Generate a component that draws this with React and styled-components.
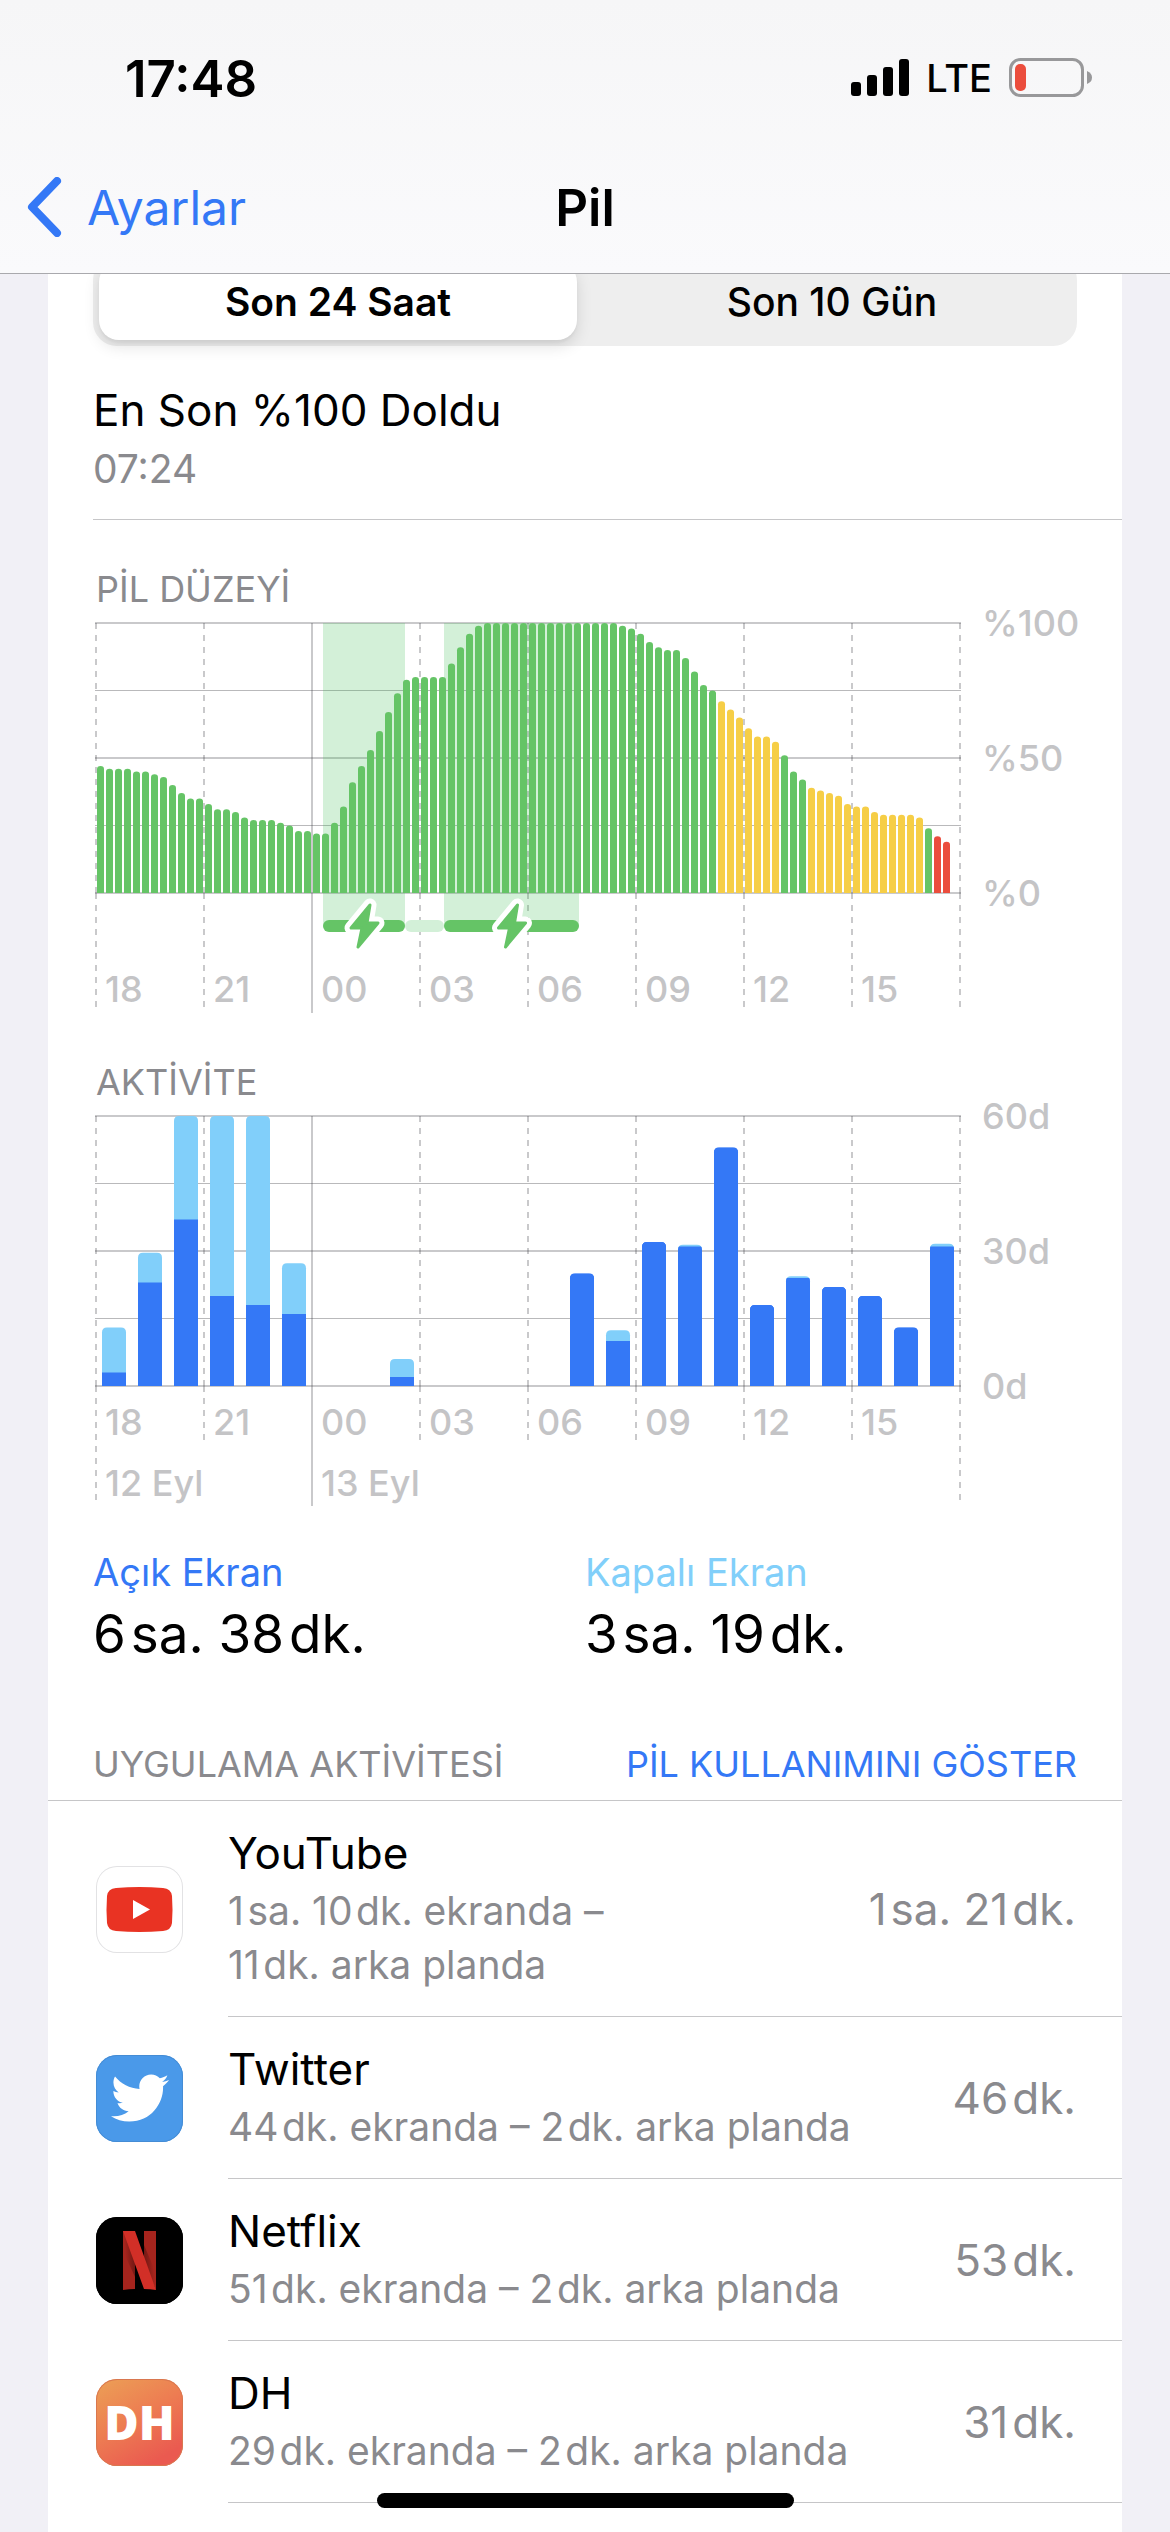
import React, { useState } from 'react';
import styled, { createGlobalStyle } from 'styled-components';
import { FaTwitter } from 'react-icons/fa';

const GREEN = '#65c466';
const YELLOW = '#f6ce46';
const RED = '#eb4d3d';
const BLUE = '#3478f6';
const SKY = '#81cffa';

// one bar for every 15 minutes
const levels = [
  47, 46, 46, 46, 45, 45, 44, 43, 40, 37, 35, 35,
  33, 31, 31, 30, 28, 27, 27, 27, 26, 25, 23, 23,
  22, 22, 26, 32, 41, 47, 53, 60, 67, 74, 79, 80,
  80, 80, 80, 85, 91, 96, 99, 100, 100, 100, 100, 100,
  100, 100, 100, 100, 100, 100, 100, 100, 100, 100, 99, 98,
  96, 93, 91, 90, 90, 87, 82, 77, 75, 71, 68, 65,
  61, 58, 58, 56, 51, 45, 42, 39, 38, 37, 36, 33,
  32, 32, 30, 29, 29, 29, 29, 28, 24, 21, 19,
];

const levelColor = (i) => {
  if (i >= 93) return RED;
  if ((i >= 69 && i <= 75) || (i >= 79 && i <= 91)) return YELLOW;
  return GREEN;
};

const charging = [
  { from: 227, to: 309 },
  { from: 348, to: 483 },
];

// minutes per hour: [screen on, total]
const activity = [
  [3, 13], [23, 29.6], [37, 60], [20, 60], [18, 60], [16, 27.3],
  [0, 0], [0, 0], [2, 6], [0, 0], [0, 0], [0, 0],
  [0, 0], [25, 25], [10, 12.4], [32, 32], [31, 31.4], [53, 53],
  [18, 18], [24, 24.4], [22, 22], [20, 20], [13, 13], [31, 31.6],
];

const hours = ['18', '21', '00', '03', '06', '09', '12', '15'];

const apps = [
  { id: 'youtube', name: 'YouTube', usage: ['1\u200Asa. 10\u200Adk. ekranda –', '11\u200Adk. arka planda'], total: '1\u200Asa. 21\u200Adk.' },
  { id: 'twitter', name: 'Twitter', usage: ['44\u200Adk. ekranda – 2\u200Adk. arka planda'], total: '46\u200Adk.' },
  { id: 'netflix', name: 'Netflix', usage: ['51\u200Adk. ekranda – 2\u200Adk. arka planda'], total: '53\u200Adk.' },
  { id: 'dh', name: 'DH', usage: ['29\u200Adk. ekranda – 2\u200Adk. arka planda'], total: '31\u200Adk.' },
];

const PLOT_X = 3;
const PLOT_Y = 13;
const PLOT_W = 864;
const PLOT_H = 270;

const ChartGrid = ({ tickEnd, edgeEnd }) => (
  <g stroke="#3c3c43" strokeOpacity="0.28" strokeWidth="2" fill="none">
    {[0, 0.5, 1].map((part) => (
      <path key={part} d={`M${PLOT_X - 1} ${PLOT_Y + PLOT_H * part}h${PLOT_W + 2}`} />
    ))}
    {[0.25, 0.75].map((part) => (
      <path
        key={part}
        d={`M${PLOT_X - 1} ${Math.floor(PLOT_Y + PLOT_H * part) + 0.5}h${PLOT_W + 2}`}
        strokeWidth="1"
        strokeOpacity="0.36"
      />
    ))}
    {[0, 1, 2, 3, 4, 5, 6, 7, 8].map((i) => {
      const solid = i === 2;
      const edge = i === 0 || i === 8;
      const end = solid ? 403 : edge ? edgeEnd : tickEnd;
      const x = PLOT_X + i * 108;
      const base = PLOT_Y + PLOT_H;
      return (
        <path
          key={i}
          d={`M${x} ${PLOT_Y}V${base}M${x} ${base}V${end}`}
          strokeDasharray={solid ? undefined : '6 6'}
        />
      );
    })}
  </g>
);

const HourLabels = ({ y }) => (
  <g>
    {hours.map((hour, i) => (
      <ChartText key={hour} x={PLOT_X + 9 + i * 108} y={y}>{hour}</ChartText>
    ))}
  </g>
);

const ValueLabels = ({ labels }) => (
  <g>
    {labels.map((label, i) => (
      <ChartText key={label} x={PLOT_X + PLOT_W + 22} y={PLOT_Y + 13 + i * 135}>{label}</ChartText>
    ))}
  </g>
);

const BOLT = 'M6 2L-13 25H-2L-6 44L14 20H3Z';

const BatteryChart = () => (
  <Chart viewBox="0 0 984 403" role="img" aria-label="Pil düzeyi">
    <ChartGrid tickEnd={397} edgeEnd={397} />
    {charging.map(({ from, to }) => (
      <rect key={from} x={PLOT_X + from} y={PLOT_Y} width={to - from} height="303" fill="#37bb4e" fillOpacity="0.22" />
    ))}
    {levels.map((level, i) => {
      const x = PLOT_X + i * 9 + 1;
      const top = PLOT_Y + PLOT_H - level * 2.7;
      return (
        <path
          key={i}
          d={`M${x} ${PLOT_Y + PLOT_H}V${top + 3}q0 -3 3.5 -3t3.5 3V${PLOT_Y + PLOT_H}z`}
          fill={levelColor(i)}
        />
      );
    })}
    <rect x={PLOT_X + 309} y="310" width="39" height="12" rx="6" fill="#d3f0d8" />
    {charging.map(({ from, to }) => (
      <g key={from}>
        <rect x={PLOT_X + from} y="310" width={to - from} height="12" rx="6" fill={GREEN} />
        <g transform={`translate(${PLOT_X + (from + to) / 2} 293)`}>
          <path d={BOLT} fill="#fff" stroke="#fff" strokeWidth="13" strokeLinejoin="round" />
          <path d={BOLT} fill={GREEN} stroke={GREEN} strokeWidth="3" strokeLinejoin="round" />
        </g>
      </g>
    ))}
    <HourLabels y={392} />
    <ValueLabels labels={['%100', '%50', '%0']} />
  </Chart>
);

const ActivityChart = () => (
  <Chart viewBox="0 0 984 403" role="img" aria-label="Aktivite">
    <ChartGrid tickEnd={337} edgeEnd={397} />
    {activity.map(([on, total], i) => {
      if (!total) return null;
      const x = PLOT_X + i * 36 + 6;
      const bottom = PLOT_Y + PLOT_H;
      const shape = `M${x} ${bottom}V${bottom - total * 4.5 + 5}q0 -5 5 -5h14q5 0 5 5V${bottom}z`;
      return (
        <g key={i}>
          <clipPath id={`hour-${i}`}>
            <rect x={x} y={bottom - on * 4.5} width="24" height={on * 4.5} />
          </clipPath>
          <path d={shape} fill={on === total ? BLUE : SKY} />
          <path d={shape} fill={BLUE} clipPath={`url(#hour-${i})`} />
        </g>
      );
    })}
    <HourLabels y={332} />
    <ChartText x={PLOT_X + 9} y="393">12 Eyl</ChartText>
    <ChartText x={PLOT_X + 225} y="393">13 Eyl</ChartText>
    <ValueLabels labels={['60d', '30d', '0d']} />
  </Chart>
);

const AppIcon = ({ id }) => {
  if (id === 'youtube') {
    return (
      <IconTile $background="#fff" $outline="#e2e2e4">
        <svg width="87" height="87" viewBox="0 0 87 87" aria-hidden="true">
          <path d="M20 22Q43.500 20 67 22Q75 22.500 76 30Q77 43.500 76 57Q75 64.500 67 65Q43.500 67 20 65Q12 64.500 11 57Q10 43.500 11 30Q12 22.500 20 22Z" fill="#e93323" />
          <path d="M37 34L54 43.500L37 53Z" fill="#fff" />
        </svg>
      </IconTile>
    );
  }
  if (id === 'twitter') {
    return (
      <IconTile $background="#4a99e9" $outline="#448cd5">
        <FaTwitter size={58} color="#fff" aria-hidden="true" />
      </IconTile>
    );
  }
  if (id === 'netflix') {
    return (
      <IconTile $background="#000" $outline="#000">
        <svg width="87" height="87" viewBox="0 0 87 87" aria-hidden="true">
          <defs>
            <linearGradient id="foldLeft" x1="0" y1="0.600" x2="1" y2="0.400">
              <stop offset="0.200" stopColor="#a5241d" />
              <stop offset="1" stopColor="#6d1713" />
            </linearGradient>
            <linearGradient id="foldRight" x1="1" y1="0.400" x2="0" y2="0.600">
              <stop offset="0.200" stopColor="#a5241d" />
              <stop offset="1" stopColor="#6d1713" />
            </linearGradient>
          </defs>
          <path d="M27 14h12v58q-6 0 -12 1z" fill="#a5241d" />
          <path d="M27 14L39 43V60L27 34z" fill="url(#foldLeft)" />
          <path d="M48 14h12v59L48 44z" fill="#a5241d" />
          <path d="M48 28L60 56V73L48 44z" fill="url(#foldRight)" />
          <path d="M27 14h12l21 59q-6 -1 -12 -1z" fill="#d22f27" />
        </svg>
      </IconTile>
    );
  }
  return (
    <IconTile $background="linear-gradient(150deg, #ec9a55 8%, #ed7c52 45%, #ea5a50 85%)" $outline="#d9774f">
      <Monogram>DH</Monogram>
    </IconTile>
  );
};

const App = () => {
  const [range, setRange] = useState('24h');

  return (
    <Screen>
      <GlobalStyle />
      <Header>
        <StatusBar>
          <Clock>17:48</Clock>
          <StatusIcons>
            <svg width="58" height="38" viewBox="0 0 58 38" aria-hidden="true">
              <rect x="0" y="23" width="10" height="14" rx="3" />
              <rect x="16" y="16" width="10" height="21" rx="3" />
              <rect x="32" y="8" width="10" height="29" rx="3" />
              <rect x="48" y="0" width="10" height="37" rx="3" />
            </svg>
            <Network>LTE</Network>
            <svg width="83" height="40" viewBox="0 0 83 40" aria-hidden="true">
              <rect x="1.500" y="1.500" width="72" height="36" rx="10" fill="none" stroke="#98989a" strokeWidth="3" />
              <rect x="6" y="6" width="11" height="27" rx="5" fill="#eb4d3d" />
              <path d="M78 13q5 2 5 6.500t-5 6.500z" fill="#98989a" />
            </svg>
          </StatusIcons>
        </StatusBar>
        <NavBar>
          <BackLink href="#ayarlar">
            <svg width="36" height="60" viewBox="0 0 36 60" fill="none" aria-hidden="true">
              <path d="M31 4L6 30L31 56" stroke={BLUE} strokeWidth="8" strokeLinecap="round" strokeLinejoin="round" />
            </svg>
            Ayarlar
          </BackLink>
          <NavTitle>Pil</NavTitle>
        </NavBar>
      </Header>

      <Panel>
        <Segmented>
          <Segment type="button" $active={range === '24h'} onClick={() => setRange('24h')}>Son 24 Saat</Segment>
          <Segment type="button" $active={range === '10d'} onClick={() => setRange('10d')}>Son 10 Gün</Segment>
        </Segmented>

        <LastCharge>
          <h2>En Son %100 Doldu</h2>
          <p>07:24</p>
        </LastCharge>

        <ChartSection>
          <ChartTitle>PİL DÜZEYİ</ChartTitle>
          <BatteryChart />
        </ChartSection>
        <ChartSection>
          <ChartTitle>AKTİVİTE</ChartTitle>
          <ActivityChart />
        </ChartSection>

        <Totals>
          <Total $color={BLUE}>
            <dt>Açık Ekran</dt>
            <dd>{'6\u200Asa. 38\u200Adk.'}</dd>
          </Total>
          <Total $color={SKY}>
            <dt>Kapalı Ekran</dt>
            <dd>{'3\u200Asa. 19\u200Adk.'}</dd>
          </Total>
        </Totals>

        <ListHeader>
          <h3>UYGULAMA AKTİVİTESİ</h3>
          <button type="button">PİL KULLANIMINI GÖSTER</button>
        </ListHeader>
        <AppList>
          {apps.map((app) => (
            <AppRow key={app.id}>
              <AppIcon id={app.id} />
              <AppBody>
                <AppText>
                  <AppName>{app.name}</AppName>
                  <AppUsage>
                    {app.usage.map((part) => (
                      <span key={part}>{part}</span>
                    ))}
                  </AppUsage>
                </AppText>
                <AppTotal>{app.total}</AppTotal>
              </AppBody>
            </AppRow>
          ))}
        </AppList>
      </Panel>
      <HomeIndicator />
    </Screen>
  );
};

const GlobalStyle = createGlobalStyle`
  * {
    box-sizing: border-box;
  }

  body {
    margin: 0;
    background: #f1f0f6;
    font-family: Inter, 'Liberation Sans', sans-serif;
    color: #000;
  }

  h1, h2, h3, p, ul, dl, dd {
    margin: 0;
    padding: 0;
    font-weight: 400;
  }

  button {
    border: 0;
    padding: 0;
    background: none;
    font-family: inherit;
    color: inherit;
    cursor: pointer;
  }
`;

const Screen = styled.div`
  min-height: 100vh;
  display: flex;
  flex-direction: column;
`;

const Header = styled.header`
  position: sticky;
  top: 0;
  z-index: 2;
  background: linear-gradient(#f6f6f7, #fafafc);
  border-bottom: 1px solid #a9a9ad;
`;

const StatusBar = styled.div`
  display: flex;
  align-items: center;
  justify-content: space-between;
  height: 141px;
  padding: 15px 78px 0 125px;
`;

const Clock = styled.span`
  font-size: 51px;
  font-weight: 600;
`;

const StatusIcons = styled.div`
  display: flex;
  align-items: center;
  gap: 17px;
`;

const Network = styled.span`
  font-size: 38px;
  font-weight: 500;
`;

const NavBar = styled.nav`
  display: grid;
  grid-template-columns: 1fr auto 1fr;
  align-items: center;
  height: 132px;
  padding: 0 26px;
`;

const BackLink = styled.a`
  display: flex;
  align-items: center;
  gap: 25px;
  font-size: 48px;
  color: ${BLUE};
  text-decoration: none;
`;

const NavTitle = styled.h1`
  font-size: 51px;
  font-weight: 600;
`;

const Panel = styled.main`
  flex: 1;
  margin: -18px 48px 0;
  background: #fff;
`;

const Segmented = styled.div`
  display: flex;
  gap: 16px;
  height: 90px;
  margin: 0 45px;
  padding: 6px;
  border-radius: 24px;
  background: #eeeeee;
`;

const Segment = styled.button`
  flex: 1;
  border-radius: 20px;
  font-size: 39px;
  font-weight: ${({ $active }) => ($active ? 600 : 500)};
  ${({ $active }) => $active && `
    background: #fff;
    box-shadow: 0 6px 16px rgba(0, 0, 0, 0.12), 0 3px 3px rgba(0, 0, 0, 0.04);
  `}
`;

const LastCharge = styled.section`
  display: flex;
  flex-direction: column;
  gap: 8px;
  margin: 37px 0 0 45px;
  padding-bottom: 26px;
  border-bottom: 1px solid #c6c6c8;

  h2 {
    font-size: 44px;
    line-height: 54px;
  }

  p {
    font-size: 39px;
    line-height: 48px;
    color: #8a8a8e;
  }
`;

const ChartSection = styled.section`
  margin: 48px 45px 0;
`;

const ChartTitle = styled.h3`
  margin-left: 3px;
  font-size: 36px;
  line-height: 42px;
  color: #8a8a8e;
`;

const Chart = styled.svg`
  display: block;
  width: 100%;
  overflow: visible;
`;

const ChartText = styled.text`
  font-size: 36px;
  font-weight: 500;
  fill: #c4c4c6;
`;

const Totals = styled.dl`
  display: grid;
  grid-template-columns: 1fr 1fr;
  margin: 42px 45px 0;
`;

const Total = styled.div`
  display: flex;
  flex-direction: column;
  gap: 6px;

  dt {
    font-size: 38px;
    line-height: 48px;
    color: ${({ $color }) => $color};
  }

  dd {
    font-size: 53px;
    line-height: 64px;
  }
`;

const ListHeader = styled.div`
  display: flex;
  justify-content: space-between;
  margin-top: 77px;
  padding: 0 45px 15px;
  border-bottom: 1px solid #c6c6c8;

  h3, button {
    font-size: 36px;
    line-height: 42px;
  }

  h3 {
    color: #8a8a8e;
  }

  button {
    color: ${BLUE};
  }
`;

const AppList = styled.ul`
  list-style: none;
`;

const AppRow = styled.li`
  display: flex;
  align-items: center;
  padding-left: 48px;
`;

const IconTile = styled.div`
  display: flex;
  flex: none;
  align-items: center;
  justify-content: center;
  width: 87px;
  height: 87px;
  border-radius: 21px;
  background: ${({ $background }) => $background};
  box-shadow: inset 0 0 0 1px ${({ $outline }) => $outline};
`;

const Monogram = styled.span`
  font-family: 'Open Sans', sans-serif;
  font-size: 47px;
  font-weight: 800;
  line-height: 1;
  color: #fff;
`;

const AppBody = styled.div`
  display: flex;
  flex: 1;
  align-items: center;
  justify-content: space-between;
  margin-left: 45px;
  padding: 25px 46px 24px 0;
  border-bottom: 1px solid #c6c6c8;
`;

const AppText = styled.div`
  display: flex;
  flex-direction: column;
  gap: 4px;
`;

const AppName = styled.h2`
  font-size: 44px;
  line-height: 54px;
`;

const AppUsage = styled.p`
  font-size: 39px;
  line-height: 54px;
  color: #8a8a8e;

  span {
    display: block;
  }
`;

const AppTotal = styled.span`
  font-size: 44px;
  line-height: 54px;
  color: #8a8a8e;
  white-space: nowrap;
`;

const HomeIndicator = styled.div`
  position: fixed;
  bottom: 24px;
  left: 50%;
  width: 417px;
  height: 15px;
  margin-left: -208px;
  border-radius: 8px;
  background: #000;
`;

export default App;
